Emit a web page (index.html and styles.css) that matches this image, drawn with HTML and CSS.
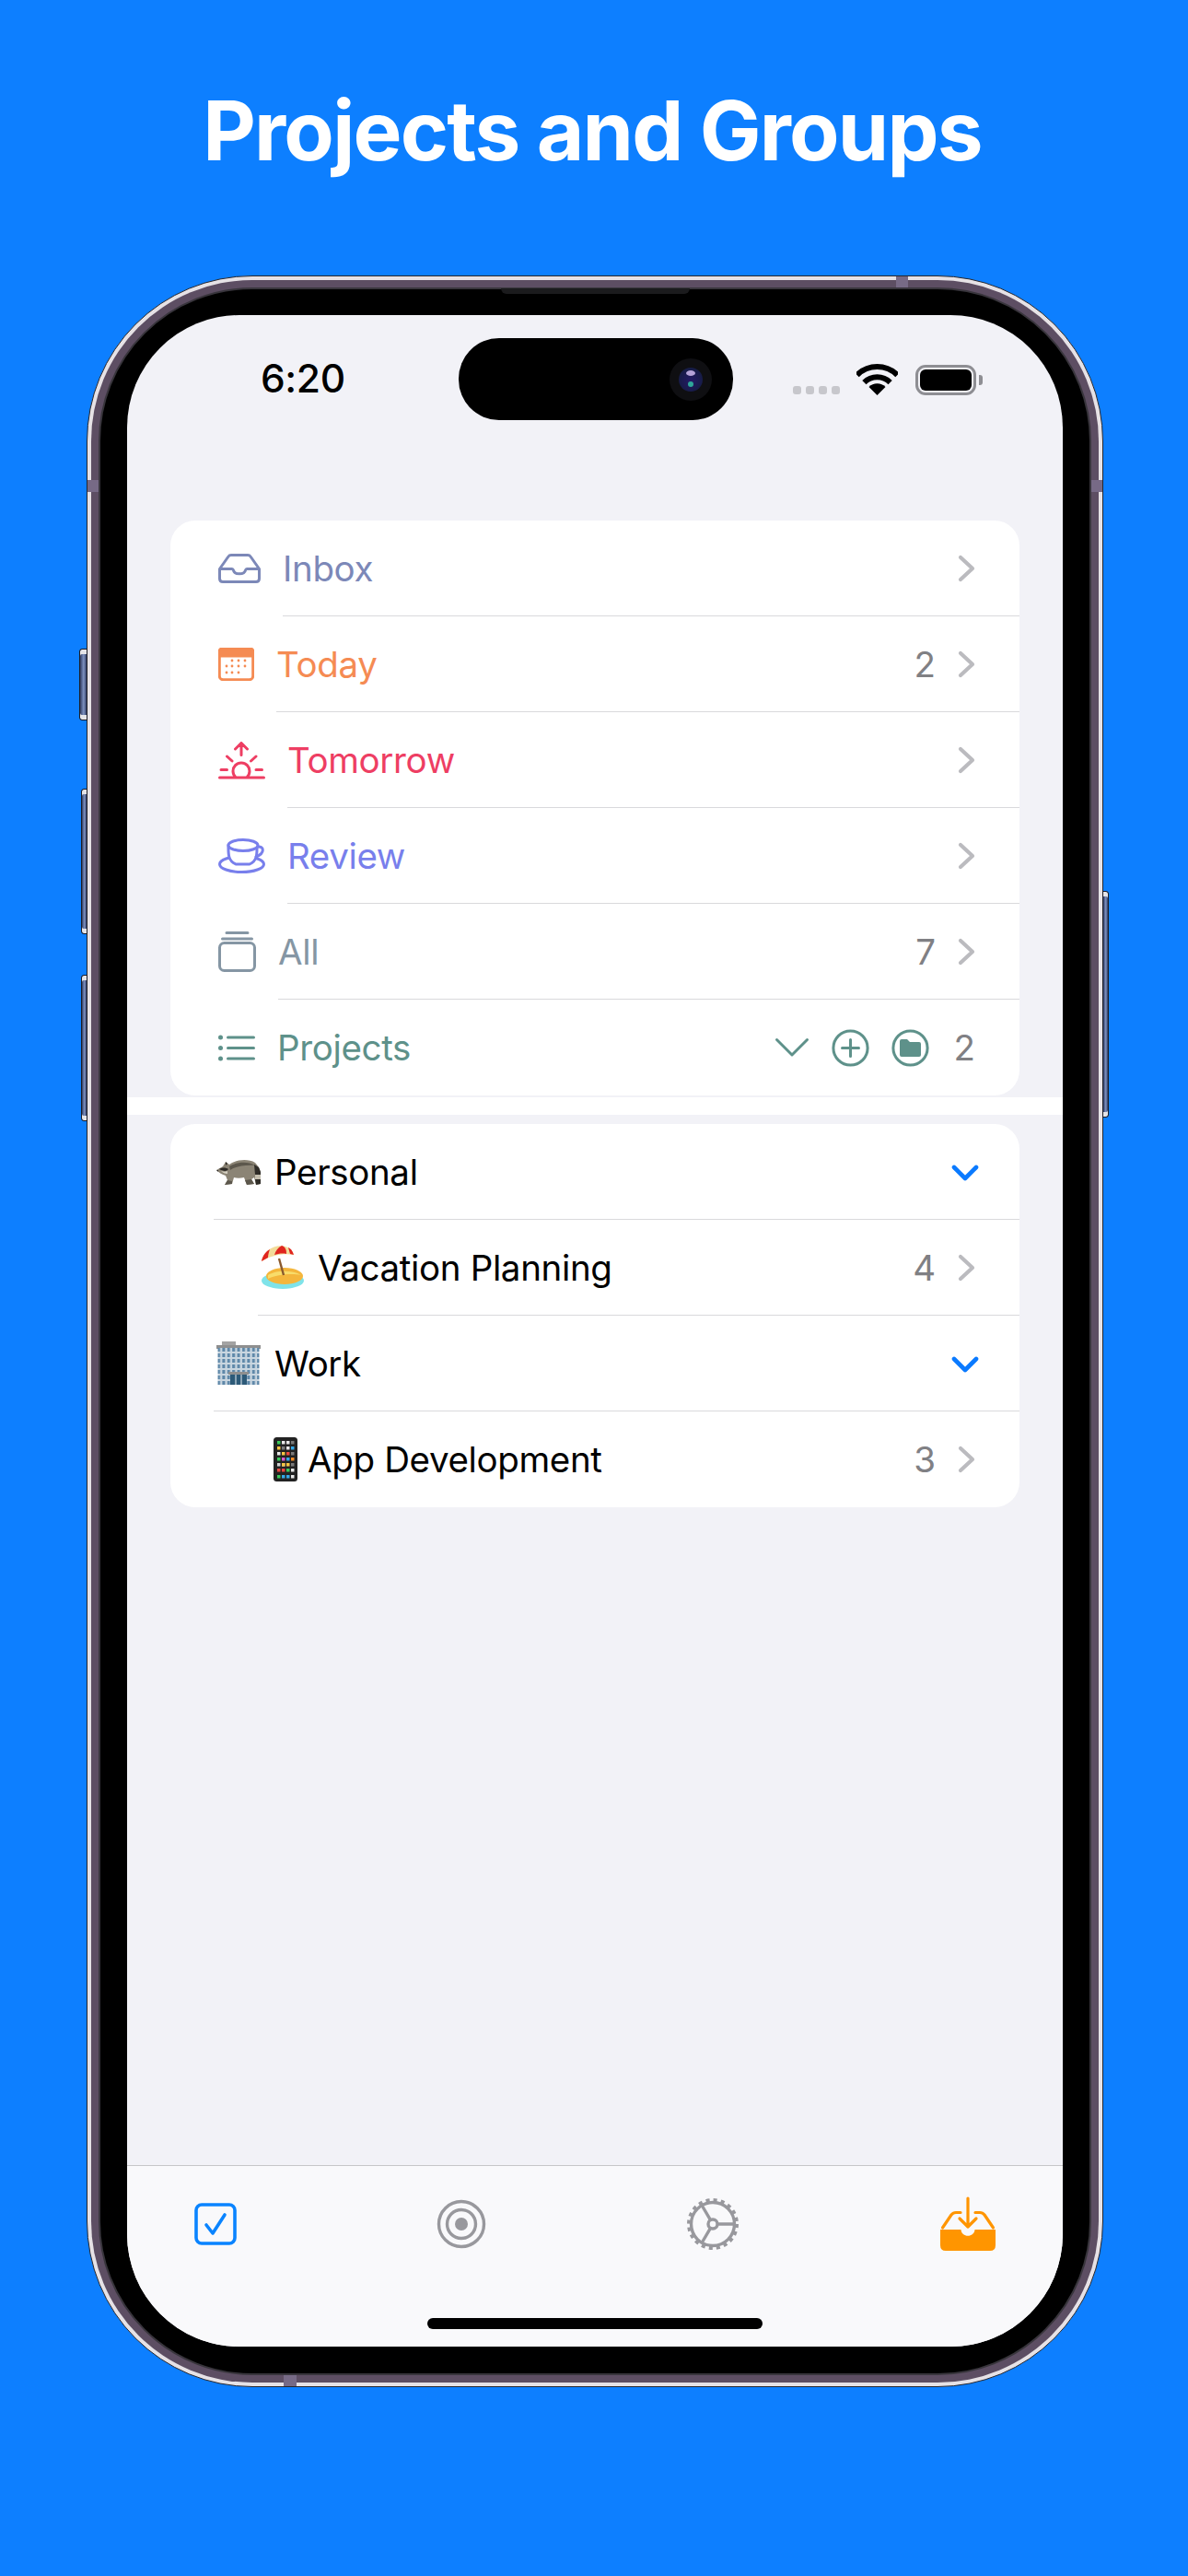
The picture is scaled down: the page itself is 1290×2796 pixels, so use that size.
FILE: index.html
```html
<!DOCTYPE html>
<html lang="en">
<head>
<meta charset="utf-8">
<title>Projects and Groups</title>
<link rel="stylesheet" href="styles.css">
</head>
<body>
<h1 class="headline">Projects and Groups</h1>
<div class="phone">
  <span class="hw-btn hw-mute"></span>
  <span class="hw-btn hw-vol-up"></span>
  <span class="hw-btn hw-vol-down"></span>
  <span class="hw-btn hw-power"></span>
  <div class="rim">
    <span class="ant ant-top"></span>
    <span class="ant ant-left"></span>
    <span class="ant ant-right"></span>
    <span class="ant ant-bottom"></span>
    <div class="bezel">
      <span class="speaker"></span>
      <div class="screen">
        <div class="island"><span class="cam"><i class="lens"><b class="glint"></b><b class="glint2"></b></i></span></div>
        <div class="status">
          <span class="time">6:20</span>
          <div class="status-right">
            <div class="signal"><i></i><i></i><i></i><i></i></div>
            <svg class="wifi" width="45" height="34" viewBox="0 0 45 34"><path class="wifi-arc" d="M.6 12.1A31 31 0 0 1 44.4 12.1"/><path class="wifi-arc" d="M8.4 20.1A20 20 0 0 1 36.6 20.1"/><path d="M22.5 34L13.5 25A12.7 12.7 0 0 1 31.5 25Z"/></svg>
            <div class="battery"><i></i></div>
            <span class="battery-tip"></span>
          </div>
        </div>

        <section class="card">
          <div class="row row-inbox">
            <svg class="ic" width="46" height="32" viewBox="0 0 46 32"><path d="M1.5 16.5L11 3Q12 1.5 14 1.5H32Q34 1.5 35 3L44.5 16.5V27Q44.5 30.5 41 30.5H5Q1.5 30.5 1.5 27ZM1.5 16.5H15Q16 16.5 16.5 18C17.5 23 28.5 23 29.5 18Q30 16.5 31 16.5H44.5"/></svg>
            <div class="body"><span class="label">Inbox</span><svg class="chev" width="20" height="30" viewBox="0 0 20 30"><path d="M3 3L16 15L3 27"/></svg></div>
          </div>
          <div class="row row-today">
            <svg class="ic" width="39" height="36" viewBox="0 0 39 36"><rect x="1.3" y="1.3" width="36.4" height="33.4" rx="4"/><path class="fillc" d="M1 9V5Q1 1 5 1H34Q38 1 38 5V9Z"/><g class="fillc nostroke"><circle cx="15" cy="14" r="1.4"/><circle cx="22" cy="14" r="1.4"/><circle cx="29" cy="14" r="1.4"/><circle cx="9" cy="20" r="1.4"/><circle cx="15" cy="20" r="1.4"/><circle cx="22" cy="20" r="1.4"/><circle cx="29" cy="20" r="1.4"/><circle cx="9" cy="27" r="1.4"/><circle cx="15" cy="27" r="1.4"/><circle cx="22" cy="27" r="1.4"/></g></svg>
            <div class="body"><span class="label">Today</span><span class="count">2</span><svg class="chev" width="20" height="30" viewBox="0 0 20 30"><path d="M3 3L16 15L3 27"/></svg></div>
          </div>
          <div class="row row-tomorrow">
            <svg class="ic" width="51" height="41" viewBox="0 0 51 41"><path d="M1.5 39H49.5M18.8 38.5A9 9 0 1 1 31.2 38.5M3 30.5H9.5M41 30.5H47.5M9.5 16L15 21M41 16L35.5 21M25 14.5V1.8M18.5 8L25 1.5L31.5 8"/></svg>
            <div class="body"><span class="label">Tomorrow</span><svg class="chev" width="20" height="30" viewBox="0 0 20 30"><path d="M3 3L16 15L3 27"/></svg></div>
          </div>
          <div class="row row-review">
            <svg class="ic" width="51" height="38" viewBox="0 0 51 38"><ellipse cx="25.5" cy="28" rx="24" ry="8.5"/><path class="cup" d="M11 7C11 16 10 24 19 28H34C43 24 42 16 42 7Z"/><ellipse class="cup" cx="27" cy="7.5" rx="16" ry="6"/><path d="M42.5 9C50 8 51 16 41 20"/></svg>
            <div class="body"><span class="label">Review</span><svg class="chev" width="20" height="30" viewBox="0 0 20 30"><path d="M3 3L16 15L3 27"/></svg></div>
          </div>
          <div class="row row-all">
            <svg class="ic" width="41" height="44" viewBox="0 0 41 44"><rect x="1.5" y="12.5" width="38" height="30" rx="5"/><path d="M4.5 8H36.5M9 1.5H32"/></svg>
            <div class="body"><span class="label">All</span><span class="count">7</span><svg class="chev" width="20" height="30" viewBox="0 0 20 30"><path d="M3 3L16 15L3 27"/></svg></div>
          </div>
          <div class="row row-projects">
            <svg class="ic" width="40" height="29" viewBox="0 0 40 29"><path d="M10.5 3H38.5M10.5 14.5H38.5M10.5 26H38.5"/><g class="fillc nostroke"><circle cx="2.5" cy="3" r="2.5"/><circle cx="2.5" cy="14.5" r="2.5"/><circle cx="2.5" cy="26" r="2.5"/></g></svg>
            <div class="body body-last">
              <span class="label">Projects</span>
              <div class="proj-tools">
                <svg class="ic" width="38" height="22" viewBox="0 0 38 22"><path d="M2.5 2.5L19 19L35.5 2.5"/></svg>
                <svg class="ic" width="41" height="41" viewBox="0 0 41 41"><circle cx="20.5" cy="20.5" r="18.6"/><path d="M20.5 11.5V29.5M11.5 20.5H29.5"/></svg>
                <svg class="ic" width="41" height="41" viewBox="0 0 41 41"><circle cx="20.5" cy="20.5" r="18.6"/><path class="fillc nostroke" d="M9 13Q9 11 11 11H17L20 14H30Q32 14 32 16V28Q32 30 30 30H11Q9 30 9 28Z"/></svg>
              </div>
              <span class="count count-end">2</span>
            </div>
          </div>
        </section>

        <div class="strip"></div>

        <section class="card">
          <div class="prow">
            <svg class="emoji emoji-group" width="48" height="28" viewBox="0 0 48 28"><path fill="#8b8475" d="M0 12L7 8L10 3L14 6C20 1 34 -1 42 4C46 8 48 12 48 17V27L43 28L41 20L38 22L41 27L33 28L30 20C26 21 22 21 19 20L17 27L9 28L12 23L10 18C6 17 3 15 0 12Z"/><path fill="#5c574c" d="M14 8C22 3 34 2 42 7C34 6 22 7 15 12ZM9 28L12 23L17 24L17 27ZM33 28L31 23L38 22L41 27Z"/><path fill="#2d2a26" d="M3 11C6 9 10 9 13 11C11 14 7 13 3 11ZM0 12L2 12L2 14ZM10 3L12 5L10 7Z"/><path fill="#d5d0c2" d="M5 13C8 14 10 14 12 13L12 16C9 16 7 15 5 13Z"/><path fill="#2f2c27" d="M41 6L46 9L48 14V17H42ZM42 22H48V27L43 28Z"/><path fill="#c4beae" d="M42 17H48V22H42Z"/></svg>
            <span class="plabel">Personal</span>
            <svg class="chev-down" width="30" height="18" viewBox="0 0 30 18"><path d="M3 3L15 15L27 3"/></svg>
          </div>
          <div class="prow prow-child">
            <svg class="emoji emoji-beach" width="47" height="47" viewBox="0 0 47 47"><ellipse cx="24" cy="38" rx="23" ry="9" fill="#7fe3e9"/><ellipse cx="26" cy="33" rx="20" ry="9" fill="#f4b63c"/><path fill="#f8dc6a" d="M8 32C16 27 34 26 44 32C34 30 18 31 8 36Z"/><path d="M20 14L25 32" stroke="#8a5a2e" stroke-width="2.4"/><path fill="#f2dc9a" d="M1 17C3 6 15 -2 27 1C34 3 36 9 36 10C26 8 12 10 1 17Z"/><path fill="#e0251f" d="M1 17C2 11 6 6 10 4C9 7 8 10 8 13ZM15 10C16 6 19 2 23 0C28 2 28 6 28 9C23 8 19 9 15 10ZM30 2C34 4 35 7 36 10L32 9Z"/></svg>
            <span class="plabel">Vacation Planning</span>
            <span class="count">4</span>
            <svg class="chev" width="20" height="30" viewBox="0 0 20 30"><path d="M3 3L16 15L3 27"/></svg>
          </div>
          <div class="prow">
            <svg class="emoji emoji-group" width="48" height="47" viewBox="0 0 48 47"><defs><pattern id="winp" width="5.4" height="6" patternUnits="userSpaceOnUse"><rect width="5.4" height="6" fill="#c9d6e0"/><rect x="1" y="1" width="3" height="4" fill="#5d87a8"/></pattern></defs><rect x="6" y="0" width="15" height="5" fill="#a3a3a3"/><rect x="0" y="4" width="48" height="4" fill="#8f8f8f"/><rect x="1.5" y="7" width="45" height="40" fill="url(#winp)"/><rect x="13" y="33" width="22" height="3" fill="#8f8f8f"/><rect x="15" y="36" width="18" height="11" fill="#2d5a78"/><path d="M21 36V47M27 36V47" stroke="#c9d6e0" stroke-width="1.2"/></svg>
            <span class="plabel">Work</span>
            <svg class="chev-down" width="30" height="18" viewBox="0 0 30 18"><path d="M3 3L15 15L27 3"/></svg>
          </div>
          <div class="prow prow-child prow-last">
            <svg class="emoji emoji-phone" width="26" height="48" viewBox="0 0 26 48"><rect width="26" height="48" rx="3.5" fill="#222"/><g fill="#e8e8e8"><rect x="9" y="4" width="3.5" height="3.5"/><rect x="14" y="4" width="3.5" height="3.5"/><rect x="4" y="16" width="3.5" height="3.5"/><rect x="14" y="10" width="3.5" height="3.5"/><rect x="9" y="28" width="3.5" height="3.5"/><rect x="19" y="34" width="3.5" height="3.5"/><rect x="19" y="41" width="3.5" height="3.5"/></g><g fill="#3bc95a"><rect x="4" y="4" width="3.5" height="3.5"/><rect x="4" y="22" width="3.5" height="3.5"/><rect x="14" y="34" width="3.5" height="3.5"/><rect x="4" y="41" width="3.5" height="3.5"/></g><g fill="#7a7a7a"><rect x="19" y="4" width="3.5" height="3.5"/><rect x="9" y="10" width="3.5" height="3.5"/><rect x="19" y="16" width="3.5" height="3.5"/><rect x="19" y="28" width="3.5" height="3.5"/></g><g fill="#f5c542"><rect x="4" y="10" width="3.5" height="3.5"/><rect x="9" y="16" width="3.5" height="3.5"/><rect x="9" y="28" width="3.5" height="3.5"/><rect x="14" y="28" width="3.5" height="3.5"/></g><g fill="#e8483f"><rect x="14" y="16" width="3.5" height="3.5"/><rect x="4" y="34" width="3.5" height="3.5"/><rect x="9" y="34" width="3.5" height="3.5"/></g><g fill="#35a8e8"><rect x="14" y="22" width="3.5" height="3.5"/><rect x="19" y="10" width="3.5" height="3.5"/><rect x="9" y="41" width="3.5" height="3.5"/><rect x="14" y="41" width="3.5" height="3.5"/></g><g fill="#d45ad0"><rect x="9" y="22" width="3.5" height="3.5"/></g><g fill="#f08a24"><rect x="19" y="22" width="3.5" height="3.5"/></g><rect x="4" y="28" width="3.5" height="3.5" fill="#cfcfcf"/></svg>
            <span class="plabel">App Development</span>
            <span class="count">3</span>
            <svg class="chev" width="20" height="30" viewBox="0 0 20 30"><path d="M3 3L16 15L3 27"/></svg>
          </div>
        </section>

        <nav class="tabbar">
          <div class="tabs">
            <svg class="tab-check" width="46" height="46" viewBox="0 0 46 46"><rect x="2" y="2" width="42" height="42" rx="6"/><path d="M13 24L20 33L33 13"/></svg>
            <svg class="tab-gray" width="54" height="54" viewBox="0 0 54 54"><circle cx="27" cy="27" r="24.5"/><circle cx="27" cy="27" r="15.5"/><circle class="solid" cx="27" cy="27" r="7"/></svg>
            <svg class="tab-gray tab-gear" width="56" height="56" viewBox="0 0 56 56"><circle cx="28" cy="28" r="23.5"/><circle class="teeth" cx="28" cy="28" r="25.5"/><circle cx="28" cy="28" r="5"/><path d="M33 28H52M25.5 23.7L16 7.5M25.5 32.3L16 48.5"/></svg>
            <svg class="tab-inbox" width="60" height="60" viewBox="0 0 60 60"><path class="solid-o" d="M0 36H22.5C23 45 37 45 37.5 36H60V53Q60 59 54 59H6Q0 59 0 53Z"/><path d="M2.5 34L12 20Q14 17.5 17 17.5H22M38 17.5H43Q46 17.5 48 20L57.5 34M30 2V33M21 24L30 33L39 24"/></svg>
          </div>
          <div class="home-indicator"></div>
        </nav>
      </div>
    </div>
  </div>
</div>
</body>
</html>
```

FILE: styles.css
```css
* { box-sizing: border-box; }
html, body { margin: 0; padding: 0; }
body {
  width: 1290px;
  height: 2796px;
  overflow: hidden;
  background: #0d7fff;
  font-family: "Inter", "Liberation Sans", sans-serif;
}
.headline {
  margin: 0;
  padding-top: 88px;
  height: 299px;
  text-align: center;
  color: #fff;
  font-size: 89px;
  line-height: 108px;
  font-weight: 700;
  letter-spacing: -1.8px;
  padding-right: 4px;
}

/* device */
.phone {
  position: relative;
  width: 1104px;
  height: 2292px;
  margin-left: 94px;
  border-radius: 180px;
  background: #e6e2e6;
  border: 1px solid #26262c;
  padding: 4px;
}
.rim {
  position: relative;
  height: 100%;
  border-radius: 175px;
  background: #5d4e63;
  padding: 8px;
}
.bezel {
  position: relative;
  height: 100%;
  border-radius: 167px;
  background: #000;
  border: 2px solid #38353c;
  padding: 28px 29px 29px;
}
.speaker {
  position: absolute;
  top: -1px;
  left: 435px;
  width: 205px;
  height: 6px;
  background: #1b1b1d;
  border-radius: 0 0 8px 8px;
}
.ant { position: absolute; background: #776a86; }
.ant-top { top: -4px; left: 874px; width: 13px; height: 13px; }
.ant-bottom { bottom: -4px; left: 209px; width: 14px; height: 13px; }
.ant-left { left: -4px; top: 217px; width: 13px; height: 13px; }
.ant-right { right: -4px; top: 217px; width: 13px; height: 13px; }

.hw-btn {
  position: absolute;
  background: linear-gradient(90deg, #2f3b62, #7f93c2 55%, #2f3b62);
  border: 1px solid #1c1c24;
  border-radius: 3px 0 0 3px;
  box-shadow: inset 0 5px 0 #e4e4e8, inset 0 -5px 0 #e4e4e8;
}
.hw-mute { left: -9px; top: 404px; width: 9px; height: 78px; }
.hw-vol-up { left: -7px; top: 556px; width: 7px; height: 158px; }
.hw-vol-down { left: -7px; top: 758px; width: 7px; height: 159px; }
.hw-power { right: -7px; top: 667px; width: 7px; height: 246px; border-radius: 0 3px 3px 0; }

.screen {
  position: relative;
  height: 100%;
  border-radius: 122px;
  background: #f2f2f7;
  overflow: hidden;
  display: flex;
  flex-direction: column;
}
.island {
  position: absolute;
  top: 25px;
  left: 360px;
  width: 298px;
  height: 89px;
  border-radius: 44px;
  background: #000;
  display: flex;
  align-items: center;
  justify-content: flex-end;
  padding-right: 23px;
}
.cam {
  width: 46px;
  height: 46px;
  border-radius: 50%;
  background: #0f0f12;
  display: flex;
  align-items: center;
  justify-content: center;
}
.lens {
  position: relative;
  display: block;
  width: 26px;
  height: 26px;
  border-radius: 50%;
  background: radial-gradient(circle at 50% 55%, #241a66, #161c46 70%, #1a2340);
}
.glint {
  position: absolute;
  left: 8px;
  top: 3px;
  width: 10px;
  height: 6px;
  border-radius: 50%;
  background: #b5a3d8;
}
.glint2 {
  position: absolute;
  left: 10px;
  top: 15px;
  width: 6px;
  height: 6px;
  border-radius: 50%;
  background: #2fa79a;
}

/* status bar */
.status {
  height: 223px;
  flex: none;
  display: flex;
  justify-content: space-between;
  align-items: flex-start;
  padding: 53px 87px 0 145px;
}
.time {
  font-size: 42.5px;
  line-height: 32px;
  font-weight: 500;
  color: #000;
  letter-spacing: -.4px;
}
.status-right { display: flex; align-items: center; }
.signal {
  display: flex;
  gap: 5px;
  align-self: flex-end;
  margin-right: 18px;
  margin-bottom: 1px;
}
.signal i {
  width: 9px;
  height: 9px;
  border-radius: 3px;
  background: #c7c7cc;
}
.wifi { margin-right: 19px; }
.wifi-arc { fill: none; stroke: #000; stroke-width: 6; }
.battery {
  width: 66px;
  height: 33px;
  border: 3px solid #8e8e93;
  border-radius: 11px;
  padding: 2px;
}
.battery i {
  display: block;
  height: 100%;
  border-radius: 6px;
  background: #000;
}
.battery-tip {
  width: 4px;
  height: 11px;
  margin-left: 3px;
  background: #8e8e93;
  border-radius: 0 3px 3px 0;
}

/* list cards */
.card {
  flex: none;
  margin: 0 47px;
  background: #fff;
  border-radius: 27px;
  overflow: hidden;
}
.strip { flex: none; height: 19px; margin: 2px 0 10px; background: #fff; }
.row {
  display: flex;
  align-items: center;
  height: 104px;
  padding-left: 52px;
  font-size: 38.5px;
  letter-spacing: -.35px;
}
.row .ic { flex: none; fill: none; stroke: currentColor; stroke-width: 3; stroke-linecap: round; stroke-linejoin: round; }
.row-inbox { color: #7c88b8; }
.row-today { color: #f58b53; }
.row-tomorrow { color: #ee3e63; }
.row-review { color: #787fec; }
.row-all { color: #8596a4; }
.row-projects { color: #5e918a; }
.row .fillc { fill: currentColor; }
.row .nostroke { stroke: none; }
.row .cup { fill: #fff; }
.body {
  flex: 1;
  align-self: stretch;
  display: flex;
  align-items: center;
  margin-left: 24px;
  padding-right: 47px;
  border-bottom: 1px solid #d9d9dc;
}
.body-last { border-bottom: 0; padding-right: 48px; }
.label { flex: 1; }
.count {
  color: #808084;
  font-size: 38.5px;
  letter-spacing: 0;
}
.count-end { margin-left: 27px; }
.chev {
  flex: none;
  margin-left: 24px;
  fill: none;
  stroke: #bbbbbf;
  stroke-width: 4.2;
  stroke-linecap: round;
  stroke-linejoin: round;
}
.proj-tools { display: flex; align-items: center; gap: 24px; }

.prow {
  display: flex;
  align-items: center;
  height: 104px;
  margin-left: 47px;
  padding-right: 47px;
  padding-left: 3px;
  border-bottom: 1px solid #d9d9dc;
  font-size: 38.5px;
  letter-spacing: -.35px;
  color: #000;
}
.prow-child { margin-left: 95px; }
.prow-last { margin-left: 109px; border-bottom: 0; }
.emoji { flex: none; }
.emoji-group { margin-right: 15px; }
.emoji-beach { margin-right: 15px; }
.emoji-phone { margin-right: 11px; }
.plabel { flex: 1; }
.chev-down {
  flex: none;
  margin-top: 3px;
  margin-right: -3px;
  fill: none;
  stroke: #0a7aff;
  stroke-width: 4.6;
  stroke-linecap: round;
  stroke-linejoin: round;
}

/* tab bar */
.tabbar {
  margin-top: auto;
  height: 197px;
  flex: none;
  background: #f9f9fb;
  border-top: 1px solid #c6c6c8;
  display: flex;
  flex-direction: column;
  align-items: center;
}
.tabs {
  align-self: stretch;
  height: 58px;
  margin-top: 34px;
  padding: 0 73px;
  display: flex;
  justify-content: space-between;
  align-items: center;
}
.tab-check { fill: none; stroke: #0a84ff; stroke-width: 3.6; stroke-linecap: round; stroke-linejoin: round; }
.tab-gray { fill: none; stroke: #98989d; stroke-width: 3.4; }
.tab-gear { margin-right: 2px; }
.tab-gray .solid { fill: #98989d; stroke: none; }
.tab-gray .teeth { stroke-width: 5; stroke-dasharray: 4 4; }
.tab-inbox { fill: none; stroke: #ff9500; stroke-width: 3.2; stroke-linecap: round; stroke-linejoin: round; }
.tab-inbox .solid-o { fill: #ff9500; stroke: none; }
.home-indicator {
  width: 364px;
  height: 12px;
  margin-top: auto;
  margin-bottom: 19px;
  border-radius: 6px;
  background: #000;
}
```
